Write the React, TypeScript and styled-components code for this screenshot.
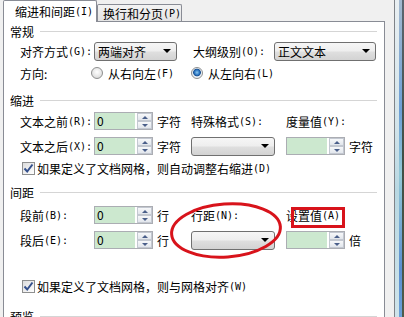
import React, { FC } from "react";
import styled, { createGlobalStyle } from "styled-components";

const GlobalStyle = createGlobalStyle`
  html, body { margin: 0; padding: 0; }
  body {
    background: #f0f0f0;
    font-family: "Noto Sans CJK SC", "Noto Sans", sans-serif;
    font-size: 12px;
    color: #000;
  }
`;

const Screen = styled.div`
  position: relative;
  display: flex;
  width: 404px;
  height: 317px;
  overflow: hidden;
  background: #f0f0f0;
`;

const Dialog = styled.div`
  width: 391px;
  padding-left: 3px;
  display: flex;
  flex-direction: column;
`;

const TabStrip = styled.div`
  display: flex;
  align-items: flex-end;
  height: 25px;
`;

const Tab = styled.div<{ $active?: boolean }>`
  box-sizing: border-box;
  display: flex;
  align-items: center;
  white-space: nowrap;
  border: 1px solid #898c95;
  border-bottom: none;
  border-radius: 2px 2px 0 0;
  width: ${(p) => (p.$active ? 94 : 85)}px;
  height: ${(p) => (p.$active ? 22 : 17)}px;
  padding-left: ${(p) => (p.$active ? 11 : 5)}px;
  margin-bottom: ${(p) => (p.$active ? -1 : 0)}px;
  background: ${(p) =>
    p.$active ? "#fff" : "linear-gradient(#f3f3f3, #e4e4e4)"};
  position: relative;
  z-index: ${(p) => (p.$active ? 1 : 0)};
`;

const Panel = styled.div`
  box-sizing: border-box;
  width: 382px;
  flex: 1;
  background: #fff;
  border: 1px solid #898c95;
  padding: 0 7px 0 6px;
`;

const SectionHeader = styled.div<{ $mt: number }>`
  display: flex;
  align-items: center;
  height: 18px;
  margin-top: ${(p) => p.$mt}px;
`;

const Rule = styled.div`
  flex: 1;
  height: 1px;
  margin-left: 6px;
  background: #d5d5d5;
`;

const Row = styled.div<{ $mt: number; $h?: number }>`
  display: flex;
  align-items: center;
  height: ${(p) => p.$h ?? 20}px;
  margin-top: ${(p) => p.$mt}px;
  padding-left: 10px;
  white-space: nowrap;
`;

const Cell = styled.div<{ $w: number }>`
  width: ${(p) => p.$w}px;
  flex: none;
  display: flex;
  align-items: center;
`;

const Acc = styled.span`
  font-family: "DejaVu Sans Mono", "Liberation Mono", monospace;
  font-size: 10px;
`;

const Select = styled.div<{ $w: number }>`
  box-sizing: border-box;
  width: ${(p) => p.$w}px;
  height: 19px;
  display: flex;
  align-items: center;
  justify-content: space-between;
  padding: 0 5px 0 3px;
  border: 1px solid #707070;
  border-radius: 3px;
  background: linear-gradient(#f6f6f6 0%, #eeeeee 48%, #dfdfdf 52%, #d3d3d3 100%);
`;

const DropArrow = styled.span`
  width: 0;
  height: 0;
  margin-left: auto;
  border-left: 4px solid transparent;
  border-right: 4px solid transparent;
  border-top: 4px solid #000;
`;

const SpinBox = styled.div`
  box-sizing: border-box;
  display: flex;
  width: 59px;
  height: 18px;
  border: 1px solid #abadb3;
  background: #fff;
`;

const SpinField = styled.div`
  flex: 1;
  background: #cce8cf;
  padding-left: 2px;
  line-height: 16px;
`;

const SpinButtons = styled.div`
  width: 15px;
  margin-left: 2px;
  display: flex;
  flex-direction: column;
`;

const SpinButton = styled.div`
  box-sizing: border-box;
  flex: 1;
  display: flex;
  align-items: center;
  justify-content: center;
  border: 1px solid #c3c8d1;
  background: linear-gradient(#f7f8fa, #e2e6ec);
`;

const SpinArrow = styled.span<{ $up?: boolean }>`
  width: 0;
  height: 0;
  border-left: 3px solid transparent;
  border-right: 3px solid transparent;
  border-top: ${(p) => (p.$up ? "none" : "3px solid #4a5f8a")};
  border-bottom: ${(p) => (p.$up ? "3px solid #4a5f8a" : "none")};
`;

const Unit = styled.span`
  margin-left: 4px;
`;

const RadioItem = styled.label<{ $w?: number }>`
  display: flex;
  align-items: center;
  width: ${(p) => (p.$w ? `${p.$w}px` : "auto")};
`;

const RadioDot = styled.span<{ $checked?: boolean }>`
  box-sizing: border-box;
  width: 12px;
  height: 12px;
  margin-right: 5px;
  border-radius: 50%;
  border: 1px solid #8e8f8f;
  background: ${(p) =>
    p.$checked
      ? "radial-gradient(circle at 50% 45%, #8cc8f0 0px, #2a74c0 2.5px, #1b4f8f 3.5px, #e8eef4 4.2px, #f4f4f4 100%)"
      : "radial-gradient(circle at 50% 40%, #ffffff 0%, #e4e4e4 60%, #cfcfcf 100%)"};
`;

const CheckRow = styled(Row)`
  padding-left: 12px;
`;

const CheckBox = styled.span`
  box-sizing: border-box;
  display: flex;
  align-items: center;
  justify-content: center;
  width: 13px;
  height: 13px;
  margin-right: 2px;
  border: 1px solid #8e8f8f;
  background: linear-gradient(135deg, #dcdcdc, #ffffff);
`;

const Frame = styled.div`
  display: flex;
  width: 10px;
`;

const FrameStripe = styled.div<{ $w: number; $bg: string }>`
  width: ${(p) => p.$w}px;
  background: ${(p) => p.$bg};
`;

const Marks = styled.svg`
  position: absolute;
  left: 0;
  top: 0;
  pointer-events: none;
`;

const Spin: FC<{ value?: string }> = ({ value }) => (
  <SpinBox>
    <SpinField>{value}</SpinField>
    <SpinButtons>
      <SpinButton>
        <SpinArrow $up />
      </SpinButton>
      <SpinButton>
        <SpinArrow />
      </SpinButton>
    </SpinButtons>
  </SpinBox>
);

const Check: FC = () => (
  <CheckBox>
    <svg width="11" height="11" viewBox="0 0 11 11">
      <path d="M1.5 5.5 L4.2 8.5 L9.5 1.5" fill="none" stroke="#34508c" strokeWidth="2" />
    </svg>
  </CheckBox>
);

const App: FC = () => {
  return (
    <>
      <GlobalStyle />
      <Screen>
        <Dialog>
          <TabStrip>
            <Tab $active>
              缩进和间距<Acc>(I)</Acc>
            </Tab>
            <Tab>
              换行和分页<Acc>(P)</Acc>
            </Tab>
          </TabStrip>
          <Panel>
            <SectionHeader $mt={0}>
              常规
              <Rule />
            </SectionHeader>
            <Row $mt={1}>
              <Cell $w={74}>
                对齐方式<Acc>(G):</Acc>
              </Cell>
              <Cell $w={99}>
                <Select $w={83}>
                  两端对齐
                  <DropArrow />
                </Select>
              </Cell>
              <Cell $w={81}>
                大纲级别<Acc>(O):</Acc>
              </Cell>
              <Select $w={102}>
                正文文本
                <DropArrow />
              </Select>
            </Row>
            <Row $mt={2}>
              <Cell $w={71}>方向:</Cell>
              <RadioItem $w={100}>
                <RadioDot />
                从右向左<Acc>(F)</Acc>
              </RadioItem>
              <RadioItem>
                <RadioDot $checked />
                从左向右<Acc>(L)</Acc>
              </RadioItem>
            </Row>

            <SectionHeader $mt={8}>
              缩进
              <Rule />
            </SectionHeader>
            <Row $mt={2}>
              <Cell $w={74}>
                文本之前<Acc>(R):</Acc>
              </Cell>
              <Cell $w={63}>
                <Spin value="0" />
              </Cell>
              <Cell $w={34}>字符</Cell>
              <Cell $w={95}>
                特殊格式<Acc>(S):</Acc>
              </Cell>
              <Cell $w={80}>
                度量值<Acc>(Y):</Acc>
              </Cell>
            </Row>
            <Row $mt={5}>
              <Cell $w={74}>
                文本之后<Acc>(X):</Acc>
              </Cell>
              <Cell $w={63}>
                <Spin value="0" />
              </Cell>
              <Cell $w={34}>字符</Cell>
              <Cell $w={95}>
                <Select $w={84}>
                  <DropArrow />
                </Select>
              </Cell>
              <Spin />
              <Unit>字符</Unit>
            </Row>
            <CheckRow $mt={3} $h={18}>
              <Check />
              如果定义了文档网格，则自动调整右缩进<Acc>(D)</Acc>
            </CheckRow>

            <SectionHeader $mt={6}>
              间距
              <Rule />
            </SectionHeader>
            <Row $mt={4}>
              <Cell $w={74}>
                段前 <Acc>(B):</Acc>
              </Cell>
              <Cell $w={63}>
                <Spin value="0" />
              </Cell>
              <Cell $w={34}>行</Cell>
              <Cell $w={95}>
                行距<Acc>(N):</Acc>
              </Cell>
              <Cell $w={80}>
                设置值<Acc>(A)</Acc>
              </Cell>
            </Row>
            <Row $mt={5}>
              <Cell $w={74}>
                段后 <Acc>(E):</Acc>
              </Cell>
              <Cell $w={63}>
                <Spin value="0" />
              </Cell>
              <Cell $w={34}>行</Cell>
              <Cell $w={95}>
                <Select $w={84}>
                  <DropArrow />
                </Select>
              </Cell>
              <Spin />
              <Unit>倍</Unit>
            </Row>
            <CheckRow $mt={27} $h={18}>
              <Check />
              如果定义了文档网格，则与网格对齐<Acc>(W)</Acc>
            </CheckRow>

            <SectionHeader $mt={12}>
              预览
              <Rule />
            </SectionHeader>
          </Panel>
        </Dialog>
        <Frame>
          <FrameStripe $w={1} $bg="#7f8388" />
          <FrameStripe
            $w={4}
            $bg="linear-gradient(180deg, #e9eff2 0%, #d3e4ea 40%, #b9d8e2 60%, #d0e4ea 100%)"
          />
          <FrameStripe
            $w={3}
            $bg="linear-gradient(180deg, #a4b9cf 0%, #6c9fd6 35%, #93c8d6 55%, #5b8fd0 85%, #6aa0d8 100%)"
          />
          <FrameStripe $w={2} $bg="linear-gradient(180deg, #5b6671 0%, #3f4f45 50%, #4e5b4a 100%)" />
        </Frame>
        <Marks width="404" height="317" viewBox="0 0 404 317">
          <ellipse
            cx="226"
            cy="230.5"
            rx="54.5"
            ry="26.5"
            transform="rotate(-4 226 230.5)"
            fill="none"
            stroke="#d8131b"
            strokeWidth="3"
          />
          <rect x="292.5" y="208.5" width="51" height="18" fill="none" stroke="#d8131b" strokeWidth="3" />
        </Marks>
      </Screen>
    </>
  );
};

export default App;
